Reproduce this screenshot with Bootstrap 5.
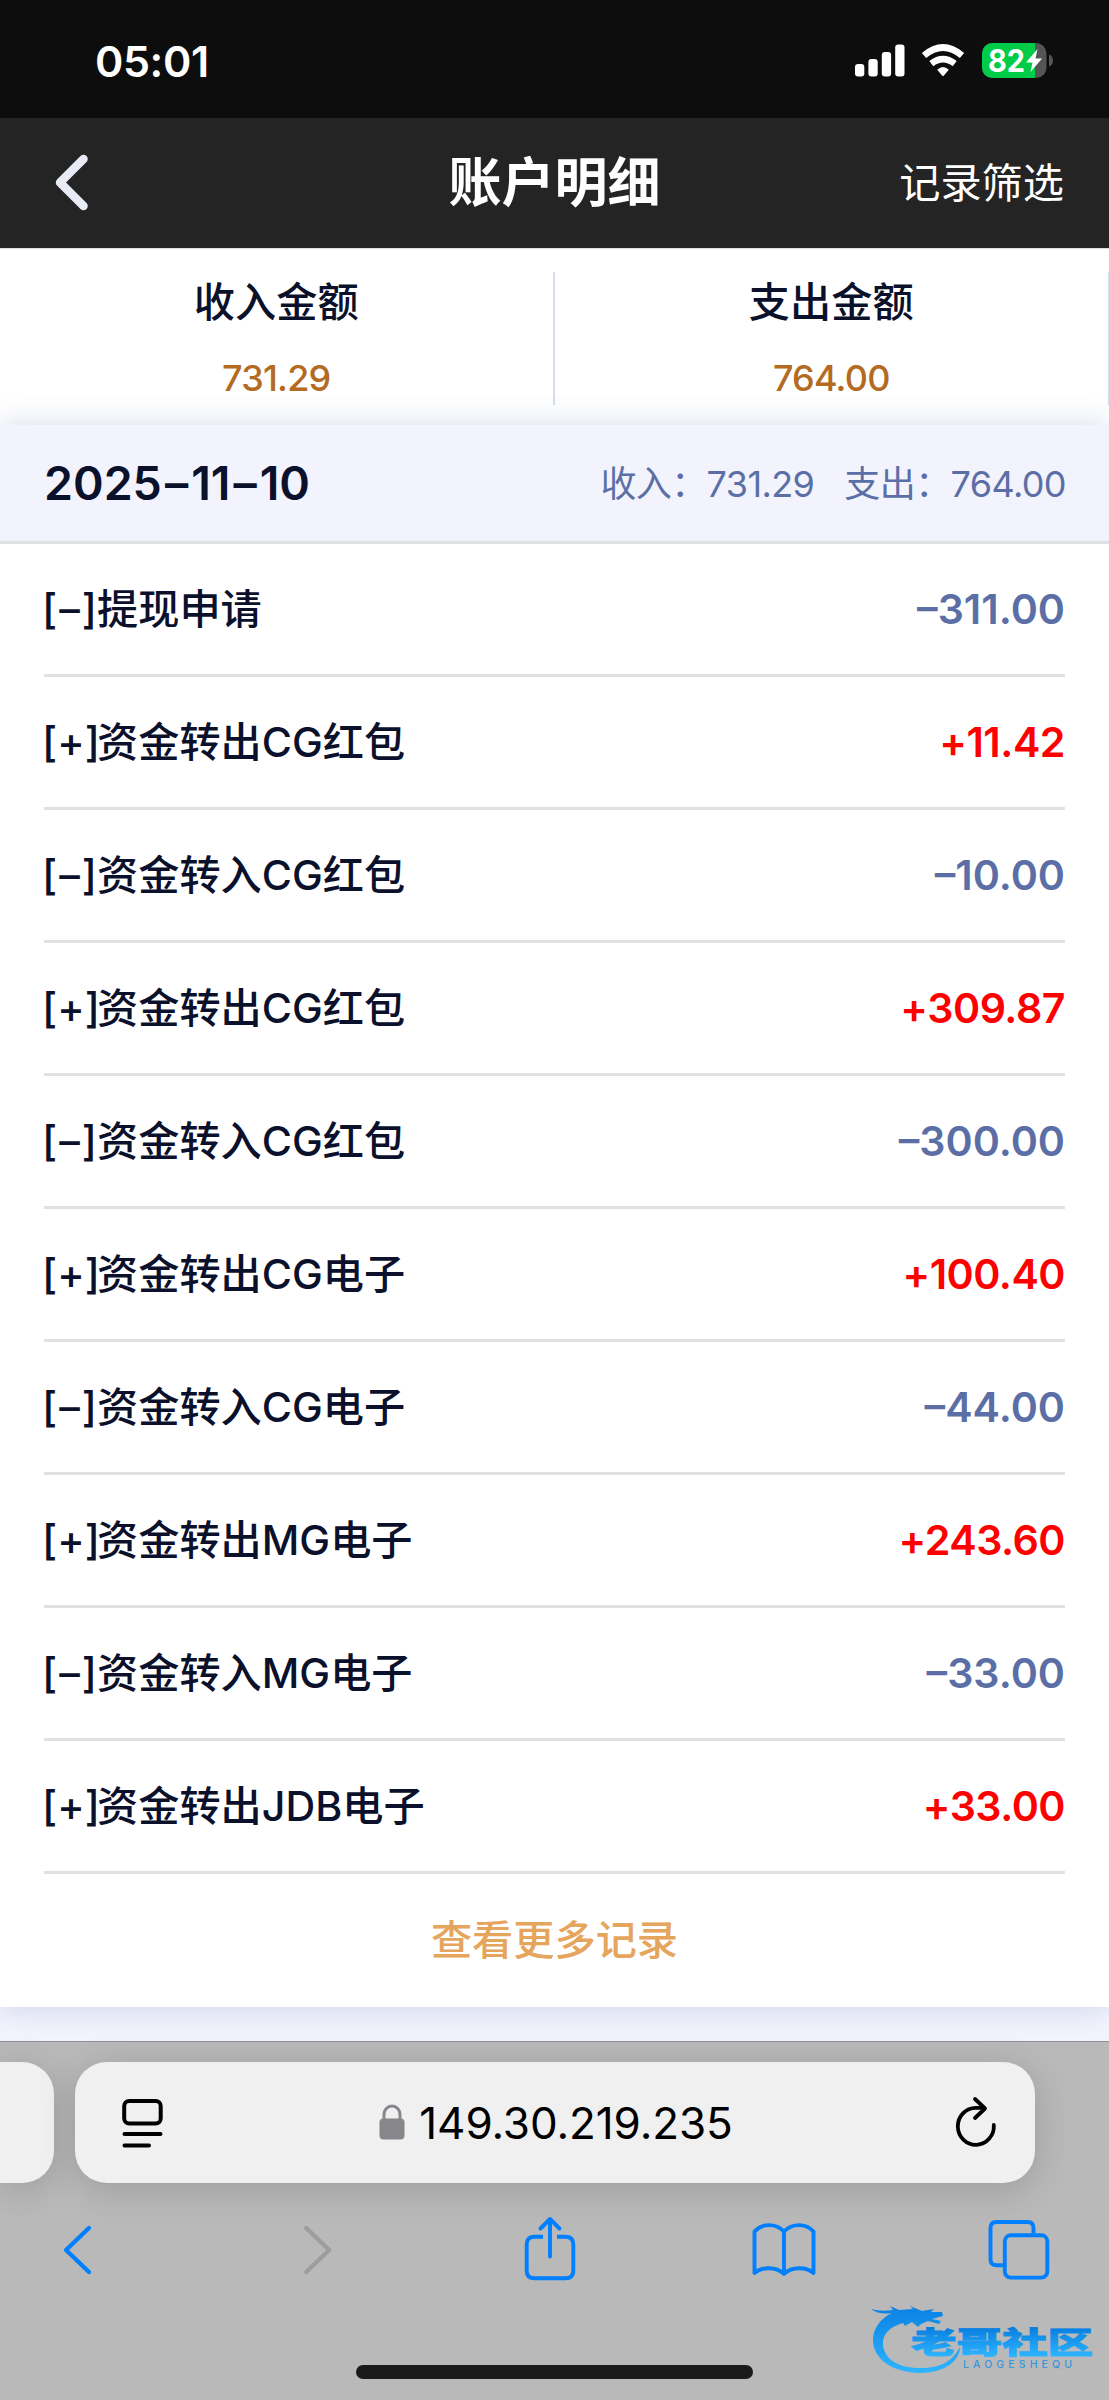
<!DOCTYPE html>
<html lang="zh-CN">
<head>
<meta charset="utf-8">
<meta name="viewport" content="width=device-width, initial-scale=1">
<title>账户明细</title>
<link href="https://cdn.jsdelivr.net/npm/bootstrap@5.3.0/dist/css/bootstrap.min.css" rel="stylesheet">
<style>
body{font-family:Inter,"Noto Sans CJK SC",sans-serif;background:#f2f3fc;color:#0b102b;font-size:41.2px;line-height:1;width:1109px;height:2400px;overflow:hidden}
svg{display:block;flex:none}
.status-bar{height:118px;background:#0d0d0d;padding:4px 55px 0 95px}
.clock{font-size:43px;font-weight:600;letter-spacing:-.4px}
.title-bar{height:130px;background:#242424;padding:1px 45px 0 54px}
.page-title{font-size:53px;font-weight:700;margin-left:-9px}
.side-cell{width:170px}
.totals{height:177px;background:#fff;padding-top:23px;border-top:1px solid #ddd}
.total-cell{height:133px;border-right:2.6px solid #d5deee;padding-top:9px}
.total-cell:last-child{border-right-width:1.5px}
.total-name{font-weight:500;line-height:42px}
.total-num{font-size:36px;color:#b36b22;line-height:36px;margin-top:37px;letter-spacing:-.8px;font-weight:450}
.ledger{height:1582px;background:#fff;box-shadow:0 0 28px rgba(70,90,160,.22)}
.day-head{height:119px;background:#f2f3fc;border-bottom:3px solid #dfe0e4;padding:0 43px 0 44px}
.day-date{font-size:46.5px;font-weight:600}
.dash{margin:0 3px}
.day-sum{font-size:36px;color:#5b6fa6;letter-spacing:-.6px;padding-top:1px}
.sum-out{margin-left:30px}
.entry-list{padding:0 44px}
.entry{height:133px;border-bottom:3px solid #e1e1e1;padding-top:1px}
.entry-name{font-weight:500;margin-left:-2px}
.sign{width:55px}
.amt{font-weight:600;color:#5b6fa6}
.amt.gain{color:#fe0000;letter-spacing:-.5px}
.more-link{height:133px;color:#e6a55c;text-decoration:none;font-weight:500}
.browser{height:359px;margin-top:34px;background:#b9b9b9;border-top:1px solid #8f9097;padding-top:20px;position:relative}
.tab-edge,.url-pill{height:121px;background:#f0f0f0;box-shadow:0 6px 36px rgba(0,0,0,.16)}
.tab-edge{width:54px;border-radius:0 32px 32px 0}
.url-pill{width:960px;margin-left:21px;border-radius:32px;padding:0 38px 0 47px}
.url-mid{margin-right:6px}
.url-text{font-size:44px;color:#000;letter-spacing:-.1px;margin-left:14px}
.tools{padding:33px 58px 0 46px}
.home-line{width:397px;height:14px;border-radius:7px;background:#1a1a1a;left:356px;top:323px}
.brand{left:866px;top:255px}
</style>
</head>
<body>
<header>
  <div class="status-bar d-flex align-items-center justify-content-between">
    <span class="clock text-white">05:01</span>
    <svg width="200" height="36" viewBox="854 43 200 36">
      <g fill="#fff"><rect x="855" y="64" width="9.3" height="12.5" rx="3"/><rect x="868.4" y="59" width="9.3" height="17.5" rx="3"/><rect x="881.8" y="52" width="9.3" height="24.5" rx="3"/><rect x="895.2" y="44.5" width="9.3" height="32" rx="3"/></g>
      <g fill="none" stroke="#fff" stroke-width="6.6"><path d="M924 55.5 Q943 39.500 962 55.500"/><path d="M931.300 63.600 Q943 54.500 954.700 63.600"/></g>
      <path fill="#fff" d="M937.200 69.700 Q943 64.500 948.800 69.700 L943.700 75.700 Q943 76.400 942.300 75.700Z"/>
      <clipPath id="cell"><rect x="982" y="43" width="64.500" height="35" rx="10.500"/></clipPath>
      <g clip-path="url(#cell)"><rect x="982" y="43" width="65" height="35" fill="#555"/><rect x="982" y="43" width="53" height="35" fill="#00cc48"/></g>
      <path d="M1049 54.500Q1053 56 1053 60.500T1049 66.500Z" fill="#555"/>
      <text x="988" y="72" font-size="31" font-weight="700" fill="#fff" font-family="Inter" textLength="37" lengthAdjust="spacingAndGlyphs">82</text>
      <path d="M1037.500 49 L1026 62.500 H1032.500 L1030.500 72 L1042 58.500 H1035.500Z" fill="#fff"/>
    </svg>
  </div>
  <nav class="title-bar d-flex align-items-center justify-content-between text-white">
    <div class="side-cell"><svg width="36" height="60" viewBox="0 1 36 60"><path d="M29.500 6 L6 29.500 L29.500 53" fill="none" stroke="#e8ebf5" stroke-width="8.500" stroke-linecap="round" stroke-linejoin="round"/></svg></div>
    <span class="page-title">账户明细</span>
    <div class="side-cell text-end">记录筛选</div>
  </nav>
</header>
<main>
  <section class="totals d-flex text-center">
    <div class="total-cell col-6"><div class="total-name">收入金额</div><div class="total-num">731.29</div></div>
    <div class="total-cell col-6"><div class="total-name">支出金额</div><div class="total-num">764.00</div></div>
  </section>
  <section class="ledger position-relative">
    <div class="day-head d-flex align-items-center justify-content-between">
      <span class="day-date">2025<span class="dash">–</span>11<span class="dash">–</span>10</span>
      <div class="day-sum d-flex"><span>收入：731.29</span><span class="sum-out">支出：764.00</span></div>
    </div>
    <div class="entry-list">
      <div class="entry d-flex align-items-center justify-content-between"><span class="entry-name d-flex"><span class="sign d-flex justify-content-between"><span>[</span><span>–</span><span>]</span></span>提现申请</span><span class="amt">–311.00</span></div>
      <div class="entry d-flex align-items-center justify-content-between"><span class="entry-name d-flex"><span class="sign d-flex justify-content-between"><span>[</span><span>+</span><span>]</span></span>资金转出CG红包</span><span class="amt gain">+11.42</span></div>
      <div class="entry d-flex align-items-center justify-content-between"><span class="entry-name d-flex"><span class="sign d-flex justify-content-between"><span>[</span><span>–</span><span>]</span></span>资金转入CG红包</span><span class="amt">–10.00</span></div>
      <div class="entry d-flex align-items-center justify-content-between"><span class="entry-name d-flex"><span class="sign d-flex justify-content-between"><span>[</span><span>+</span><span>]</span></span>资金转出CG红包</span><span class="amt gain">+309.87</span></div>
      <div class="entry d-flex align-items-center justify-content-between"><span class="entry-name d-flex"><span class="sign d-flex justify-content-between"><span>[</span><span>–</span><span>]</span></span>资金转入CG红包</span><span class="amt">–300.00</span></div>
      <div class="entry d-flex align-items-center justify-content-between"><span class="entry-name d-flex"><span class="sign d-flex justify-content-between"><span>[</span><span>+</span><span>]</span></span>资金转出CG电子</span><span class="amt gain">+100.40</span></div>
      <div class="entry d-flex align-items-center justify-content-between"><span class="entry-name d-flex"><span class="sign d-flex justify-content-between"><span>[</span><span>–</span><span>]</span></span>资金转入CG电子</span><span class="amt">–44.00</span></div>
      <div class="entry d-flex align-items-center justify-content-between"><span class="entry-name d-flex"><span class="sign d-flex justify-content-between"><span>[</span><span>+</span><span>]</span></span>资金转出MG电子</span><span class="amt gain">+243.60</span></div>
      <div class="entry d-flex align-items-center justify-content-between"><span class="entry-name d-flex"><span class="sign d-flex justify-content-between"><span>[</span><span>–</span><span>]</span></span>资金转入MG电子</span><span class="amt">–33.00</span></div>
      <div class="entry d-flex align-items-center justify-content-between"><span class="entry-name d-flex"><span class="sign d-flex justify-content-between"><span>[</span><span>+</span><span>]</span></span>资金转出JDB电子</span><span class="amt gain">+33.00</span></div>
    </div>
    <a href="#" class="more-link d-flex align-items-center justify-content-center">查看更多记录</a>
  </section>
</main>
<footer class="browser">
  <div class="d-flex">
    <div class="tab-edge"></div>
    <div class="url-pill d-flex align-items-center justify-content-between">
      <svg width="41" height="50" viewBox="0 0 41 50" fill="none" stroke="#000" stroke-width="4" stroke-linecap="round"><rect x="2.200" y="3" width="36.500" height="22.500" rx="5"/><path d="M2.500 36H38.500M2.500 47.500H27"/></svg>
      <div class="url-mid d-flex align-items-center">
        <svg width="26" height="38" viewBox="0 0 26 38"><rect x="0.500" y="14.500" width="25" height="21" rx="4" fill="#86868b"/><path d="M5 16V10.500a8 8.500 0 0 1 16 0V16" fill="none" stroke="#86868b" stroke-width="3"/></svg>
        <span class="url-text">149.30.219.235</span>
      </div>
      <svg width="42" height="50" viewBox="955 2097.500 42 50" fill="none" stroke="#000" stroke-width="3.800" stroke-linecap="round" stroke-linejoin="round" overflow="visible"><path d="M993.800 2124.500A18 18.500 0 1 1 975.800 2107.300H984"/><path d="M975 2098.500L985 2108L975 2117.500"/></svg>
    </div>
  </div>
  <div class="tools d-flex justify-content-between">
    <svg width="64" height="66" viewBox="46 2216 64 66" fill="none" stroke="#007fff" stroke-width="4.300" stroke-linecap="round" stroke-linejoin="round"><path d="M89 2228L66 2250L89 2272"/></svg>
    <svg width="64" height="66" viewBox="281.300 2216 64 66" fill="none" stroke="#9d9d9d" stroke-width="4.300" stroke-linecap="round" stroke-linejoin="round"><path d="M306.500 2228L329.500 2250L306.500 2272"/></svg>
    <svg width="64" height="66" viewBox="516.500 2216 64 66" fill="none" stroke="#007fff" stroke-width="3.900" stroke-linecap="round" stroke-linejoin="round"><path d="M549.500 2256.500V2219M540 2228.500L549.500 2219L559 2228.500"/><path stroke-linecap="butt" d="M542.500 2236.800H534q-7.800 0-7.800 7.800V2270.500q0 7.800 7.800 7.800H565q7.800 0 7.800-7.800V2244.600q0-7.800-7.800-7.800H556.500"/></svg>
    <svg width="64" height="66" viewBox="752 2216 64 66" fill="none" stroke="#007fff" stroke-width="3.900" stroke-linecap="round" stroke-linejoin="round"><path d="M784 2231.500C776 2223 762 2223 754.500 2231.500V2273C762 2266.500 776 2266.500 784 2273.800C792 2266.500 806 2266.500 813.500 2273V2231.500C806 2223 792 2223 784 2231.500V2273"/></svg>
    <svg width="64" height="66" viewBox="987 2216 64 66" fill="none" stroke="#007fff" stroke-width="3.900"><rect x="1004.800" y="2235.300" width="42.500" height="42.300" rx="6"/><path d="M1003 2265.300H996.500q-6 0-6-6V2228q0-6 6-6H1027.500q6 0 6 6V2233.500"/></svg>
  </div>
  <div class="home-line position-absolute"></div>
  <svg class="brand position-absolute" width="232" height="84" viewBox="866 2297 232 84">
    <defs><linearGradient id="wave" gradientUnits="userSpaceOnUse" x1="0" y1="2308" x2="0" y2="2372"><stop offset="0" stop-color="#0b82e4"/><stop offset="1" stop-color="#2db4ff"/></linearGradient><linearGradient id="ink" gradientUnits="userSpaceOnUse" x1="0" y1="2328" x2="0" y2="2356"><stop offset="0" stop-color="#087fe0"/><stop offset="1" stop-color="#2db4ff"/></linearGradient></defs>
    <path fill="url(#wave)" d="M871 2309Q881 2312 893 2310L890 2306L899 2310L913 2309L910 2306L922 2311L934 2309L931 2312L942 2312L943 2316L932 2319L941 2321L939 2324L928 2321L921 2324L918 2327L912 2322L905 2326L903 2323C889 2327 882 2335 883 2345C885 2361 900 2368 921 2368C940 2368 952 2362 960 2347C960 2360 946 2373 919 2373C892 2372 873 2359 873 2340C873 2328 881 2318 892 2313Q879 2315 871 2309Z"/>
    <text x="911" y="2353" font-size="30" font-weight="900" fill="url(#ink)" stroke="url(#ink)" stroke-width=".9" font-family="Noto Sans CJK SC" textLength="182" lengthAdjust="spacingAndGlyphs">老哥社区</text>
    <text x="963" y="2367.500" font-size="10.500" font-weight="500" fill="#3597dc" font-family="Inter" textLength="109">LAOGESHEQU</text>
  </svg>
</footer>
<script src="https://cdn.jsdelivr.net/npm/bootstrap@5.3.0/dist/js/bootstrap.bundle.min.js"></script>
</body>
</html>
